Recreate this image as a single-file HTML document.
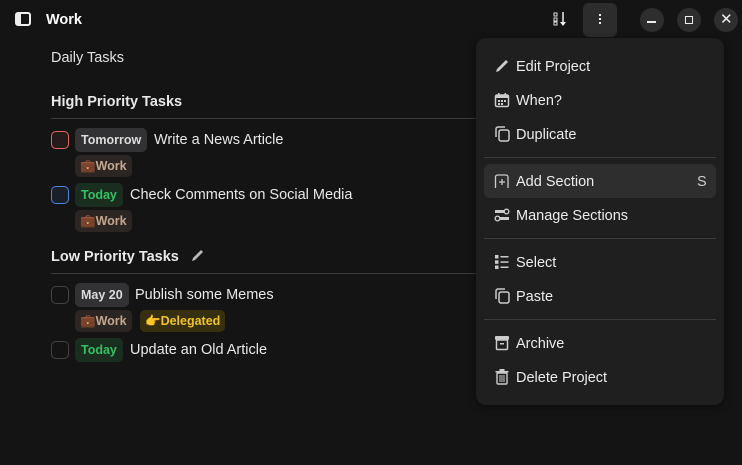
<!DOCTYPE html>
<html><head><style>
*{margin:0;padding:0;box-sizing:border-box}
body{width:742px;height:465px;background:#141414;font-family:"Liberation Sans",sans-serif;color:#e8e8e8;position:relative;overflow:hidden;font-size:14.5px}
.a{position:absolute;white-space:nowrap;line-height:20px}
.b{font-weight:bold}
.cb{position:absolute;width:18px;height:18px;border-radius:5px;border:1.5px solid #444}
.badge{position:absolute;height:24px;border-radius:5px;font-weight:bold;font-size:12.5px;line-height:25px;padding:0 6px;white-space:nowrap}
.tag{position:absolute;height:22px;border-radius:5px;font-weight:bold;font-size:12.5px;line-height:23px;padding:0 5px;background:#2b2623;color:#c6a68c;white-space:nowrap}
.hr{position:absolute;height:1px;background:#3a3a3a}
.circ{position:absolute;width:24px;height:24px;border-radius:12px;background:#2e2e2e;top:8px}
.menu{position:absolute;left:476px;top:38px;width:248px;height:367px;background:#1f1f1f;border-radius:10px;box-shadow:0 2px 8px rgba(0,0,0,.5)}
.mi{position:absolute;left:40px;font-size:14.5px;color:#ececec;line-height:20px;white-space:nowrap;margin-top:2px}
.ic{position:absolute;left:18px}
.sep{position:absolute;left:8px;width:232px;height:1px;background:#3b3b3b}
</style></head><body>
<svg class="a" style="left:15px;top:12px" width="16" height="14" viewBox="0 0 16 14"><rect x="1" y="1" width="14" height="12" rx="2" fill="none" stroke="#eee" stroke-width="2"/><rect x="2" y="2" width="4" height="10" fill="#eee"/></svg>
<div class="a b" style="left:46px;top:10px;font-size:14.5px;color:#fff">Work</div>
<svg class="a" style="left:553px;top:12px" width="16" height="14"><rect x="1" y="1" width="3" height="3" fill="none" stroke="#ddd"/><rect x="1" y="6" width="3" height="3" fill="none" stroke="#ddd"/><rect x="1" y="10" width="3" height="3" fill="none" stroke="#ddd"/><line x1="10" y1="0" x2="10" y2="11" stroke="#eee" stroke-width="1.5"/><path d="M7 10 L13 10 L10 14Z" fill="#eee"/></svg>
<div class="a" style="left:583px;top:3px;width:34px;height:34px;border-radius:6px;background:#2c2c2c"></div>
<div class="a" style="left:599px;top:14px;width:2px;height:2px;background:#eee;box-shadow:0 4px 0 #eee,0 8px 0 #eee"></div>
<div class="circ" style="left:640px"></div><div class="a" style="left:647px;top:21px;width:9px;height:1.5px;background:#eee"></div>
<div class="circ" style="left:677px"></div><div class="a" style="left:685px;top:16px;width:8px;height:8px;border:1.5px solid #eee"></div>
<div class="circ" style="left:714px"></div><div class="a" style="left:720px;top:10px;font-size:15px;color:#eee">✕</div>

<div class="a" style="left:51px;top:48px;color:#e0e0e0">Daily Tasks</div>
<div class="a b" style="left:51px;top:92px">High Priority Tasks</div>
<div class="hr" style="left:51px;top:118px;width:425px"></div>

<div class="cb" style="left:51px;top:131px;border-color:#e5675d;background:#261b1b"></div>
<div class="badge" style="left:75px;top:128px;background:#323234;color:#dcdcdc">Tomorrow</div>
<div class="a" style="left:154px;top:130px">Write a News Article</div>
<div class="tag" style="left:75px;top:155px">💼Work</div>

<div class="cb" style="left:51px;top:186px;border-color:#4a86e0;background:#1a1f28"></div>
<div class="badge" style="left:75px;top:183px;background:#1a2e20;color:#2ec262">Today</div>
<div class="a" style="left:130px;top:185px">Check Comments on Social Media</div>
<div class="tag" style="left:75px;top:210px">💼Work</div>

<div class="a b" style="left:51px;top:247px">Low Priority Tasks</div>
<svg class="a" style="left:190px;top:248px" width="15" height="15"><path d="M2 13 L3 10 L11 2 L13 4 L5 12 Z" fill="#bbb"/></svg>
<div class="hr" style="left:51px;top:273px;width:425px"></div>

<div class="cb" style="left:51px;top:286px"></div>
<div class="badge" style="left:75px;top:283px;background:#323234;color:#dcdcdc">May 20</div>
<div class="a" style="left:135px;top:285px">Publish some Memes</div>
<div class="tag" style="left:75px;top:310px">💼Work</div>
<div class="tag" style="left:140px;top:310px;background:#36300f;color:#f0c419">👉Delegated</div>

<div class="cb" style="left:51px;top:341px"></div>
<div class="badge" style="left:75px;top:338px;background:#1a2e20;color:#2ec262">Today</div>
<div class="a" style="left:130px;top:340px">Update an Old Article</div>

<div class="menu">
<svg class="ic" style="top:20px" width="16" height="16"><path d="M2 14 L3 11 L12 2 L14 4 L5 13 Z" fill="#ccc"/></svg>
<div class="mi" style="top:17px">Edit Project</div>
<svg class="ic" style="top:54px" width="16" height="16"><rect x="1.5" y="3" width="13" height="11.5" rx="1.5" fill="none" stroke="#ccc" stroke-width="1.5"/><rect x="1.5" y="3" width="13" height="3" fill="#ccc"/><rect x="4" y="1" width="1.5" height="3" fill="#ccc"/><rect x="10.5" y="1" width="1.5" height="3" fill="#ccc"/><g fill="#ccc"><rect x="4" y="8" width="2" height="2"/><rect x="7" y="8" width="2" height="2"/><rect x="10" y="8" width="2" height="2"/><rect x="4" y="11" width="2" height="2"/><rect x="7" y="11" width="2" height="2"/></g></svg>
<div class="mi" style="top:51px">When?</div>
<svg class="ic" style="top:88px" width="16" height="16"><path d="M2 11 V3 a2 2 0 0 1 2 -2 H11" fill="none" stroke="#ccc" stroke-width="1.5"/><rect x="5" y="4" width="10" height="11" rx="2" fill="none" stroke="#ccc" stroke-width="1.5"/></svg>
<div class="mi" style="top:85px">Duplicate</div>
<div class="sep" style="top:119px"></div>
<div class="a" style="left:8px;top:126px;width:232px;height:34px;background:#2e2e2e;border-radius:6px"></div>
<svg class="ic" style="top:135px" width="16" height="16"><path d="M1.5 15 V4 a2 2 0 0 1 2 -2 H12 a2 2 0 0 1 2 2 V15" fill="none" stroke="#ccc" stroke-width="1.3"/><path d="M8 6 V12 M5 9 H11" stroke="#ccc" stroke-width="1.3"/></svg>
<div class="mi" style="top:132px">Add Section</div>
<div class="a" style="left:221px;top:134px;color:#ccc">S</div>
<svg class="ic" style="top:169px" width="16" height="16"><rect x="1" y="3" width="9" height="3" fill="#ccc"/><circle cx="12.5" cy="4.5" r="2.3" fill="none" stroke="#ccc" stroke-width="1.4"/><circle cx="3.5" cy="11.5" r="2.3" fill="none" stroke="#ccc" stroke-width="1.4"/><rect x="6" y="10" width="9" height="3" fill="#ccc"/></svg>
<div class="mi" style="top:166px">Manage Sections</div>
<div class="sep" style="top:200px"></div>
<svg class="ic" style="top:216px" width="16" height="16"><g fill="#ccc"><rect x="1" y="1" width="3.5" height="3.5"/><rect x="1" y="6.3" width="3.5" height="3.5"/><rect x="1" y="11.5" width="3.5" height="3.5"/><rect x="6.5" y="2" width="8" height="1.5"/><rect x="6.5" y="7.3" width="8" height="1.5"/><rect x="6.5" y="12.5" width="8" height="1.5"/></g></svg>
<div class="mi" style="top:213px">Select</div>
<svg class="ic" style="top:250px" width="16" height="16"><path d="M2 11 V3 a2 2 0 0 1 2 -2 H11" fill="none" stroke="#ccc" stroke-width="1.5"/><rect x="5" y="4" width="10" height="11" rx="2" fill="none" stroke="#ccc" stroke-width="1.5"/></svg>
<div class="mi" style="top:247px">Paste</div>
<div class="sep" style="top:281px"></div>
<svg class="ic" style="top:297px" width="16" height="16"><rect x="1" y="1" width="14" height="4" rx="1" fill="#ccc"/><rect x="2.5" y="5" width="11" height="9.5" rx="1" fill="none" stroke="#ccc" stroke-width="1.5"/><rect x="6" y="8" width="4" height="1.5" fill="#ccc"/></svg>
<div class="mi" style="top:294px">Archive</div>
<svg class="ic" style="top:330px" width="16" height="17"><rect x="1.5" y="3" width="13" height="1.5" fill="#ccc"/><rect x="5.5" y="1" width="5" height="2" fill="#ccc"/><rect x="3" y="5" width="10" height="11" rx="1" fill="none" stroke="#ccc" stroke-width="1.4"/><path d="M6 7 V14 M8 7 V14 M10 7 V14" stroke="#ccc" stroke-width="1"/></svg>
<div class="mi" style="top:328px">Delete Project</div>
</div>
</body></html>
